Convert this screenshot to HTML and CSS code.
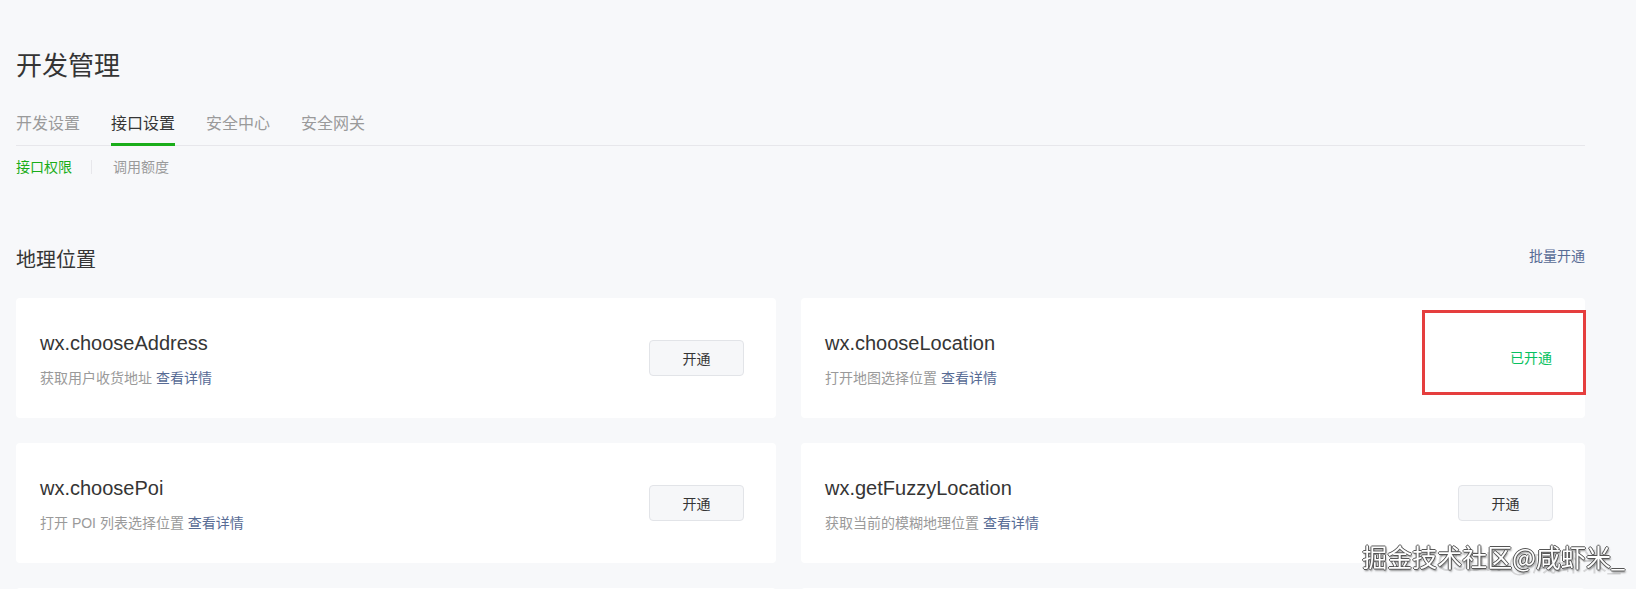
FILE: index.html
```html
<!DOCTYPE html>
<html lang="zh-CN">

<head>
    <meta charset="UTF-8">
    <meta name="viewport" content="width=device-width, initial-scale=1.0">
    <title>开发管理</title>
    <link rel="stylesheet" href="styles.css">
</head>

<body>
    <div class="page">
        <h1 class="page-title">开发管理</h1>

        <ul class="tabs">
            <li>开发设置</li>
            <li class="active">接口设置</li>
            <li>安全中心</li>
            <li>安全网关</li>
        </ul>

        <div class="subtabs">
            <a class="active">接口权限</a>
            <span class="sep"></span>
            <a>调用额度</a>
        </div>

        <section class="group">
            <div class="group-hd">
                <h2>地理位置</h2>
                <a class="link">批量开通</a>
            </div>

            <div class="card-grid">
                <div class="card">
                    <div class="card-info">
                        <div class="api-name">wx.chooseAddress</div>
                        <div class="api-desc">获取用户收货地址 <a class="link">查看详情</a></div>
                    </div>
                    <button class="btn">开通</button>
                </div>

                <div class="card">
                    <div class="card-info">
                        <div class="api-name">wx.chooseLocation</div>
                        <div class="api-desc">打开地图选择位置 <a class="link">查看详情</a></div>
                    </div>
                    <span class="status">已开通</span>
                    <div class="mark"></div>
                </div>

                <div class="card">
                    <div class="card-info">
                        <div class="api-name">wx.choosePoi</div>
                        <div class="api-desc">打开 POI 列表选择位置 <a class="link">查看详情</a></div>
                    </div>
                    <button class="btn">开通</button>
                </div>

                <div class="card">
                    <div class="card-info">
                        <div class="api-name">wx.getFuzzyLocation</div>
                        <div class="api-desc">获取当前的模糊地理位置 <a class="link">查看详情</a></div>
                    </div>
                    <button class="btn">开通</button>
                </div>

                <!-- next row, only its top edge shows -->
                <div class="card"></div>
                <div class="card"></div>
            </div>
        </section>
    </div>

    <div class="watermark">
        <span class="wm-back">CSDN @咸虾米_</span>
        <span class="wm-front">掘金技术社区@咸虾米_</span>
    </div>
</body>

</html>
```

FILE: styles.css
```css
html,
body,
ul,
li,
h1,
h2 {
    padding: 0;
    margin: 0;
    list-style: none
}

body {
    background: #f7f8fa;
    color: #353535;
    font-family: "Liberation Sans", "Noto Sans CJK SC", sans-serif;
    overflow: hidden;
}

.page {
    padding: 48px 51px 0 16px;
}

.page-title {
    font-size: 26px;
    line-height: 36px;
    font-weight: normal;
}

.tabs {
    display: flex;
    gap: 31px;
    margin-top: 28px;
    border-bottom: 1px solid #e7e7eb;
}

.tabs li {
    font-size: 16px;
    line-height: 24px;
    padding-bottom: 7px;
    border-bottom: 3px solid transparent;
    margin-bottom: -1px;
    color: #9a9a9a;
}

.tabs li.active {
    color: #353535;
    border-bottom-color: #1aad19;
}

.subtabs {
    display: flex;
    align-items: center;
    margin-top: 11px;
    font-size: 14px;
    line-height: 20px;
    color: #9a9a9a;
}

.subtabs .active {
    color: #1aad19;
}

.subtabs .sep {
    width: 1px;
    height: 14px;
    background: #e7e7eb;
    margin: 0 21px 0 19px;
}

.group {
    margin-top: 69px;
}

.group-hd {
    display: flex;
    justify-content: space-between;
    align-items: flex-start;
}

.group-hd h2 {
    font-size: 20px;
    line-height: 28px;
    font-weight: normal;
}

.group-hd .link {
    font-size: 14px;
    line-height: 20px;
}

.link {
    color: #576b95;
}

.card-grid {
    display: grid;
    grid-template-columns: 760px 1fr;
    gap: 25px;
    margin-top: 24px;
}

.card {
    position: relative;
    display: flex;
    justify-content: space-between;
    align-items: center;
    height: 120px;
    padding: 0 32px 0 24px;
    background: #fff;
    border-radius: 4px;
}

.api-name {
    font-size: 20px;
    line-height: 28px;
}

.api-desc {
    margin-top: 11px;
    font-size: 14px;
    line-height: 20px;
    color: #9a9a9a;
}

.btn {
    width: 95px;
    height: 36px;
    background: #f6f7f9;
    border: 1px solid #e2e4e8;
    border-radius: 4px;
    font-family: inherit;
    font-size: 14px;
    color: #353535;
}

.status {
    font-size: 14px;
    line-height: 20px;
    color: #07c160;
    margin-right: 1px;
}

.mark {
    position: absolute;
    top: 12px;
    right: -1px;
    width: 158px;
    height: 79px;
    border: 3px solid #e53e3e;
}

.watermark {
    position: fixed;
    right: 11px;
    bottom: 18px;
    font-size: 25px;
    line-height: 30px;
    font-family: "Noto Sans CJK SC", sans-serif;
}

.wm-back {
    position: absolute;
    right: 4px;
    top: 4px;
    white-space: nowrap;
    color: rgba(150, 150, 150, 0.35);
}

.wm-front {
    position: relative;
    white-space: nowrap;
    color: #fff;
    text-shadow: -1px 0 #555, 1px 0 #555, 0 -1px #555, 0 1px #555, 1px 2px 2px rgba(0, 0, 0, 0.5);
}
```
